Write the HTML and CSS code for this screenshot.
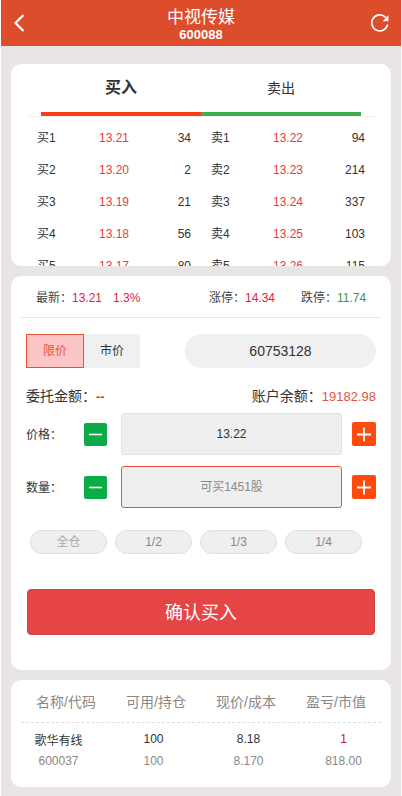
FILE: index.html
```html
<!DOCTYPE html>
<html lang="zh-CN">
<head>
    <meta charset="UTF-8">
    <meta name="viewport" content="width=device-width, initial-scale=1.0">
    <title>中视传媒</title>
    <link rel="stylesheet" href="styles.css">
</head>
<body>
    <div class="page">
        <!-- Header -->
        <div class="header">
            <svg class="header-icon" viewBox="0 0 20 22" width="20" height="22">
                <path d="M11.5 3 L3.5 11 L11.5 19" fill="none" stroke="#fff" stroke-width="2.2"/>
            </svg>
            <div class="header-title">
                <div class="stock-name">中视传媒</div>
                <div class="stock-code">600088</div>
            </div>
            <svg class="header-icon" viewBox="0 0 20 20" width="20" height="20">
                <path d="M15.6 4.4 A8 8 0 1 0 17.6 11.5" fill="none" stroke="#fff" stroke-width="1.6"/>
                <path d="M18.4 2.2 L18.4 8.2 L12.6 8.2 Z" fill="#fff"/>
            </svg>
        </div>

        <!-- Order book -->
        <div class="card book-card">
            <div class="tabs">
                <div class="tab tab-active">买入</div>
                <div class="tab">卖出</div>
            </div>
            <div class="tab-bar">
                <div class="bar-red"></div>
                <div class="bar-green"></div>
            </div>
            <div class="book">
                <div class="book-row"><span>买1</span><span class="price">13.21</span><span class="qty">34</span><span class="sell">卖1</span><span class="price">13.22</span><span class="qty">94</span></div>
                <div class="book-row"><span>买2</span><span class="price">13.20</span><span class="qty">2</span><span class="sell">卖2</span><span class="price">13.23</span><span class="qty">214</span></div>
                <div class="book-row"><span>买3</span><span class="price">13.19</span><span class="qty">21</span><span class="sell">卖3</span><span class="price">13.24</span><span class="qty">337</span></div>
                <div class="book-row"><span>买4</span><span class="price">13.18</span><span class="qty">56</span><span class="sell">卖4</span><span class="price">13.25</span><span class="qty">103</span></div>
                <div class="book-row"><span>买5</span><span class="price">13.17</span><span class="qty">80</span><span class="sell">卖5</span><span class="price">13.26</span><span class="qty">115</span></div>
            </div>
        </div>

        <!-- Order form -->
        <div class="card form-card">
            <div class="quote">
                <span class="quote-latest">最新：<em class="red">13.21</em><em class="red pct">1.3%</em></span>
                <span class="quote-up">涨停：<em class="red">14.34</em></span>
                <span class="quote-down">跌停：<em class="green">11.74</em></span>
            </div>
            <div class="type-row">
                <div class="type-switch">
                    <div class="type-btn type-active">限价</div>
                    <div class="type-btn">市价</div>
                </div>
                <div class="account">60753128</div>
            </div>
            <div class="amount-row">
                <span>委托金额：<em class="orange dash">--</em></span>
                <span>账户余额：<em class="orange">19182.98</em></span>
            </div>
            <div class="input-row">
                <span class="input-label">价格：</span>
                <div class="step step-minus"><svg viewBox="0 0 23 23" width="23" height="23"><path d="M5 11.5 H18" stroke="#fff" stroke-width="1.6"/></svg></div>
                <div class="input-box">13.22</div>
                <div class="step step-plus"><svg viewBox="0 0 24 24" width="24" height="24"><path d="M5 12.5 H19 M12 5.5 V19.5" stroke="#fff" stroke-width="1.8"/></svg></div>
            </div>
            <div class="input-row">
                <span class="input-label">数量：</span>
                <div class="step step-minus"><svg viewBox="0 0 23 23" width="23" height="23"><path d="M5 11.5 H18" stroke="#fff" stroke-width="1.6"/></svg></div>
                <div class="input-box input-focus">可买1451股</div>
                <div class="step step-plus"><svg viewBox="0 0 24 24" width="24" height="24"><path d="M5 12.5 H19 M12 5.5 V19.5" stroke="#fff" stroke-width="1.8"/></svg></div>
            </div>
            <div class="ratio-row">
                <div class="ratio ratio-all">全仓</div>
                <div class="ratio">1/2</div>
                <div class="ratio">1/3</div>
                <div class="ratio">1/4</div>
            </div>
            <div class="submit">确认买入</div>
        </div>

        <!-- Positions -->
        <div class="card pos-card">
            <div class="pos-head">
                <span>名称/代码</span>
                <span>可用/持仓</span>
                <span>现价/成本</span>
                <span>盈亏/市值</span>
            </div>
            <div class="pos-row">
                <span>歌华有线</span>
                <span>100</span>
                <span>8.18</span>
                <span class="crimson">1</span>
            </div>
            <div class="pos-row pos-sub">
                <span>600037</span>
                <span>100</span>
                <span>8.170</span>
                <span>818.00</span>
            </div>
        </div>
    </div>
</body>
</html>
```

FILE: styles.css
```css
* {
    margin: 0;
    padding: 0;
    box-sizing: border-box;
}

body {
    font-family: "Liberation Sans", "Noto Sans CJK SC", sans-serif;
    background: #fff;
    color: #333;
    font-size: 12px;
}

em {
    font-style: normal;
}

.red {
    color: #e0213c;
}

.green {
    color: #3a9a3e;
}

.orange {
    color: #e5533c;
    font-size: 13px;
}

.dash {
    color: #e8340f;
    font-weight: bold;
}

.crimson {
    color: #c8102e;
}

.page {
    width: 400px;
    height: 796px;
    margin-left: 1px;
    background: #e9e5e5;
    overflow: hidden;
}

/* Header */
.header {
    height: 46px;
    background: #dd4c2b;
    color: #fff;
    display: flex;
    align-items: center;
    justify-content: space-between;
    padding: 0 11px 0 11px;
}

.header-title {
    text-align: center;
    line-height: 1;
}

.stock-name {
    font-size: 17px;
    line-height: 20px;
    margin-top: 4px;
}

.stock-code {
    font-size: 13px;
    line-height: 14px;
    font-weight: bold;
}

.card {
    background: #fff;
    border-radius: 10px;
    margin: 0 10px;
}

/* Order book */
.book-card {
    margin-top: 18px;
    height: 202px;
    overflow: hidden;
}

.tabs {
    display: flex;
    padding: 0 30px;
    height: 48px;
    align-items: center;
}

.tab {
    width: 160px;
    text-align: center;
    font-size: 14px;
    line-height: 20px;
    color: #333;
}

.tab-active {
    font-size: 16px;
    font-weight: bold;
}

.tab-bar {
    display: flex;
    margin: 0 17px;
    padding: 0 13px;
    height: 5px;
    border-bottom: 1px solid #f0eeee;
}

.bar-red {
    width: 160px;
    height: 4px;
    background: #f73e18;
}

.bar-green {
    width: 160px;
    height: 4px;
    background: #3cae4c;
}

.book {
    padding: 5px 25px 0 26px;
}

.book-row {
    display: grid;
    grid-template-columns: 62px 62px 30px 82px 62px 30px;
    height: 32px;
    padding-top: 6px;
    align-items: baseline;
}

.sell {
    padding-left: 20px;
}

.price {
    color: #e6384f;
}

.qty {
    text-align: right;
}

/* Order form */
.form-card {
    margin-top: 10px;
    height: 394px;
    padding: 0 15px;
}

.quote {
    height: 42px;
    display: flex;
    align-items: center;
    border-bottom: 1px solid #e6e6e6;
    margin: 0 -5px;
    padding: 0 5px 1px 15px;
    color: #444;
}

.quote-latest {
    width: 173px;
}

.pct {
    margin-left: 11px;
}

.quote-up {
    width: 92px;
}

.type-row {
    display: flex;
    justify-content: space-between;
    margin-top: 16px;
}

.type-switch {
    display: flex;
    background: #f0f0f0;
    height: 34px;
}

.type-btn {
    width: 56px;
    line-height: 34px;
    text-align: center;
    font-size: 12px;
}

.type-active {
    width: 58px;
    background: #fcc5c5;
    border: 1px solid #e5533c;
    color: #e8543f;
    line-height: 32px;
}

.account {
    width: 191px;
    height: 34px;
    line-height: 34px;
    border-radius: 17px;
    background: #f0f0f0;
    text-align: center;
    font-size: 14px;
}

.amount-row {
    display: flex;
    justify-content: space-between;
    align-items: center;
    height: 20px;
    margin-top: 17px;
    font-size: 14px;
}

.input-row {
    display: flex;
    align-items: center;
    height: 42px;
    margin-top: 8px;
}

.input-row + .input-row {
    margin-top: 11px;
}

.input-label {
    width: 58px;
    font-size: 12px;
    padding-bottom: 2px;
}

.step {
    display: flex;
    align-items: center;
    justify-content: center;
    border-radius: 2px;
}

.step-minus {
    width: 23px;
    height: 23px;
    background: #0dab45;
}

.step-plus {
    width: 24px;
    height: 24px;
    background: #ff4a0d;
    margin-left: 10px;
}

.input-box {
    width: 221px;
    height: 42px;
    line-height: 40px;
    margin-left: 14px;
    border: 1px solid #e2e2e2;
    border-radius: 3px;
    background: #efefef;
    text-align: center;
    font-size: 12px;
}

.input-focus {
    border-color: #e5533c;
    color: #888;
}

.ratio-row {
    display: flex;
    gap: 8px;
    margin-top: 22px;
    padding-left: 4px;
}

.ratio {
    width: 77px;
    height: 24px;
    line-height: 22px;
    border: 1px solid #e0e0e0;
    border-radius: 12px;
    background: #efefef;
    text-align: center;
    color: #888;
}

.ratio-all {
    color: #aaa;
}

.submit {
    height: 46px;
    line-height: 46px;
    margin: 35px 1px 0;
    background: #e64545;
    border: 1px solid #c9484a;
    border-radius: 4px;
    color: #fff;
    font-size: 18px;
    text-align: center;
}

/* Positions */
.pos-card {
    margin-top: 10px;
    height: 107px;
    padding: 0 10px;
}

.pos-head {
    display: grid;
    grid-template-columns: 90px 90px 90px 90px;
    height: 43px;
    align-items: center;
    text-align: center;
    font-size: 14px;
    color: #888;
    border-bottom: 1px dashed #ddd;
}

.pos-row {
    display: grid;
    grid-template-columns: repeat(4, 95px);
    height: 22px;
    margin: 5px -10px 0;
    align-items: center;
    text-align: center;
    font-size: 12px;
}

.pos-sub {
    margin-top: 0;
    color: #888;
}
```
